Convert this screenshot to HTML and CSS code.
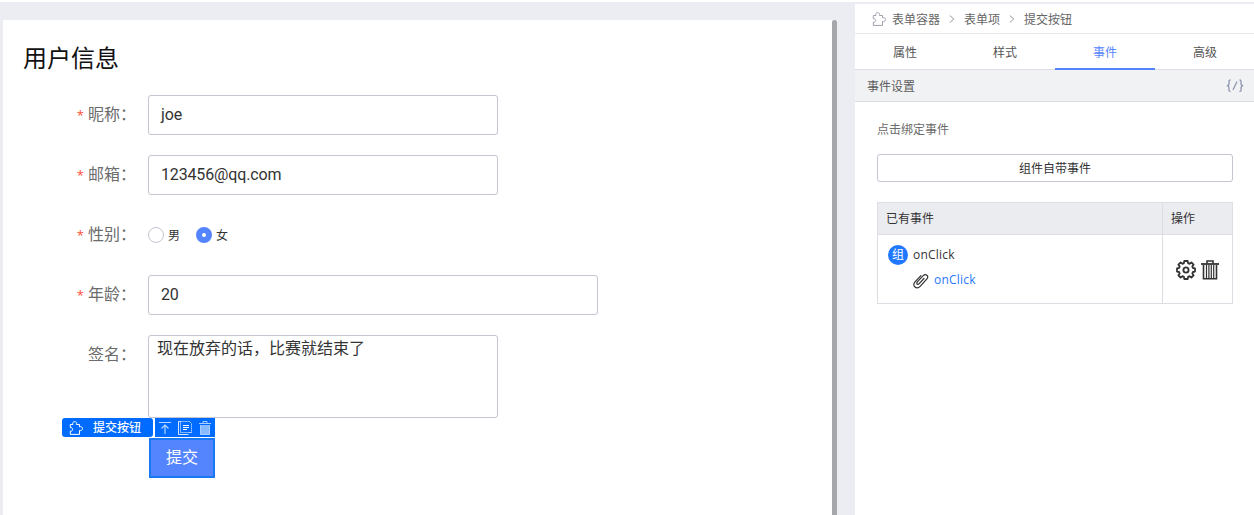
FILE: index.html
```html
<!DOCTYPE html>
<html lang="zh-CN">
<head>
<meta charset="utf-8">
<title>用户信息</title>
<link rel="stylesheet" href="styles.css">
</head>
<body>
<svg width="0" height="0" class="defs">
  <symbol id="puzzle" viewBox="0 0 14 14"><path d="M1.300 3.500H4C3.200 1.800 4.300.6 5.700.6s2.500 1.200 1.700 2.900h3.100v2.300c1.700-.6 3 .4 3 1.800s-1.300 2.400-3 1.800v4H1.300v-3.200c1.500.3 2.300-.6 2.300-1.800S2.800 6.300 1.300 6.600z" fill="none" stroke="currentColor" stroke-linejoin="round"/></symbol>
</svg>
<div class="app">
  <main class="canvas">
    <section class="page">
      <h1 class="title">用户信息</h1>
      <div class="row"><label class="label required">昵称：</label><div class="input">joe</div></div>
      <div class="row"><label class="label required">邮箱：</label><div class="input">123456@qq.com</div></div>
      <div class="row"><label class="label required">性别：</label>
        <div class="radios"><span class="radio"><i class="dot"></i><span class="radio-text">男</span></span><span class="radio"><i class="dot checked"></i><span class="radio-text">女</span></span></div>
      </div>
      <div class="row"><label class="label required">年龄：</label><div class="input wide">20</div></div>
      <div class="row area-row"><label class="label">签名：</label><div class="input area">现在放弃的话，比赛就结束了</div></div>
      <div class="submit-wrap">
        <div class="toolbar">
          <div class="tag"><svg width="14" height="14"><use href="#puzzle"/></svg><span>提交按钮</span></div>
          <div class="tools">
            <svg width="14" height="14" viewBox="0 0 14 14"><path d="M1 1.500h12M7 13V4.500M3.500 7.500L7 4l3.500 3.500" fill="none" stroke="#b5d6ff" stroke-width="1.200"/></svg>
            <svg width="14" height="14" viewBox="0 0 14 14" fill="none" stroke="#fff"><path d="M2.500.5h9l2 2v9h-2" stroke-dasharray="1 1"/><path d="M2.500.5v11h11" stroke-dasharray="1 1"/><path d="M2.500.5H.5v13h10" stroke="#d5e6ff"/><path d="M5 4.500h6M5 6.500h6M5 8.500h4"/></svg>
            <svg width="14" height="14" viewBox="0 0 14 14"><path d="M2 4h10v9.500H2z" fill="#8abaff"/><path d="M1 2.500h12M5 2V.5h4V2M2.500 4v9.500h9V4" fill="none" stroke="#a9cdff"/></svg>
          </div>
        </div>
        <button class="submit">提交</button>
      </div>
    </section>
    <div class="scrollbar"></div>
  </main>
  <aside class="panel">
    <nav class="crumbs">
      <svg class="crumb-icon" width="14" height="14"><use href="#puzzle"/></svg>
      <span>表单容器</span><svg class="sep" width="6" height="8" viewBox="0 0 6 8"><path d="M.8.5l4 3.500-4 3.500"/></svg><span>表单项</span><svg class="sep" width="6" height="8" viewBox="0 0 6 8"><path d="M.8.5l4 3.500-4 3.500"/></svg><span>提交按钮</span>
    </nav>
    <div class="tabs"><span class="tab">属性</span><span class="tab">样式</span><span class="tab active">事件</span><span class="tab">高级</span></div>
    <div class="section-head"><span>事件设置</span>
      <svg width="18" height="14" viewBox="0 0 18 14" fill="none" stroke="#8f96b0" stroke-width="1.300"><path d="M4.500 1C2.500 1 3 2.500 3 4.500S2.500 6.700.8 6.700C2.500 6.700 3 7.500 3 9.500s-.5 3 1.500 3M11 2.500L7 11M13.500 1c2 0 1.500 1.500 1.500 3.500s.5 2.200 2.200 2.200C15.500 6.700 15 7.500 15 9.500s.5 3-1.500 3"/></svg>
    </div>
    <div class="content">
      <div class="hint">点击绑定事件</div>
      <button class="bind">组件自带事件</button>
      <div class="table">
        <div class="cell head">已有事件</div><div class="cell head">操作</div>
        <div class="cell events">
          <div class="event"><span class="badge">组</span><span class="name">onClick</span></div>
          <div class="event child"><svg width="18" height="18" viewBox="0 0 18 18"><path d="M12.300 6.500L7.500 11.600c-1.500 1.600-3.400 0-1.900-1.700l5.900-6.300c2.500-2.500 6 .5 3.700 3.300L8.700 14.200c-3.800 4-9-.3-5.400-4.400l5.900-6.200" transform="translate(-.3 1)" fill="none" stroke="#333" stroke-width="1.200" stroke-linecap="round"/></svg><span class="name link">onClick</span></div>
        </div>
        <div class="cell ops">
          <svg width="20" height="20" viewBox="0 0 20 20" fill="none" stroke="#333" stroke-width="1.800" stroke-linejoin="round"><path d="M8.300 1h3.400l.4 2.200 1.400.6 1.900-1.300 2.200 2.200-1.300 1.900.6 1.400 2.100.4v3.200l-2.100.4-.6 1.400 1.300 1.900-2.200 2.200-1.900-1.300-1.400.6-.4 2.200H8.300l-.4-2.200-1.400-.6-1.900 1.300-2.200-2.200 1.300-1.900-.6-1.400L1 11.600V8.400L3.100 8l.6-1.400-1.300-1.900 2.200-2.200 1.900 1.300 1.400-.6z"/><circle cx="10" cy="10" r="2.600"/></svg>
          <svg width="18" height="20" viewBox="0 0 18 20" fill="none" stroke="#333"><path d="M0 4h18" stroke-width="1.800"/><path d="M6 3.500V1h6v2.500M2.500 5v13.700h13V5" stroke-width="1.600"/><path d="M5.500 5v13M7.900 5v13M10.300 5v13M12.700 5v13" stroke-width="1.200"/></svg>
        </div>
      </div>
    </div>
  </aside>
</div>
</body>
</html>
```
FILE: styles.css
```css
* { box-sizing: border-box; }
body { margin: 0; padding-top: 2px; height: 515px; overflow: hidden; background: #fff; color: #333; font: 12px "Roboto", "Noto Sans CJK SC", sans-serif; }
button { font-family: inherit; }
svg { display: block; flex: none; }
.defs { position: absolute; }
.app { display: flex; height: 513px; background: #ecedf2; }
.canvas { display: flex; width: 855px; padding: 18px 18px 0 3px; }
.page { width: 829px; padding: 20px; background: #fff; }
.scrollbar { width: 5px; background: #a6a7ab; border-radius: 3px 3px 0 0; }
.title { margin: 0 0 16px; height: 39px; font-size: 24px; font-weight: 400; line-height: 39px; color: #111; }
.row { display: flex; height: 40px; margin-bottom: 20px; }
.label { width: 125px; padding-right: 12px; text-align: right; font-size: 16px; line-height: 39px; color: #6b6b6b; white-space: nowrap; }
.required::before { content: "*"; margin-right: 4px; color: #ff4d36; font-family: "Open Sans", sans-serif; font-size: 13px; }
.input { width: 350px; height: 40px; padding: 0 12px; border: 1px solid #c3c5d0; border-radius: 3px; font-size: 16px; line-height: 37px; letter-spacing: -0.15px; }
.wide { width: 450px; }
.area-row { height: 83px; margin: 0; }
.area { height: 83px; padding: 1px 8px; line-height: 24px; letter-spacing: 0; }
.radios { display: flex; align-items: center; gap: 16px; }
.radio { display: flex; align-items: center; gap: 4px; }
.radio-text { padding-bottom: 2px; }
.dot { width: 16px; height: 16px; border: 1px solid #c3c5d0; border-radius: 50%; }
.dot.checked { border: 6px solid #5584ff; background: #fff; }
.submit-wrap { width: 153px; margin-left: 39px; }
.toolbar { display: flex; gap: 2px; height: 20px; color: #fff; }
.tag { display: flex; align-items: center; gap: 10px; width: 91px; height: 19px; padding-left: 7px; border-radius: 3px; background: #006cff; font-weight: 500; line-height: 20px; }
.tools { display: flex; align-items: center; gap: 6px; width: 60px; height: 19px; padding-left: 3px; background: #006cff; }
.submit { display: block; width: 66px; height: 40px; margin-left: 87px; padding: 0; border: 2px solid #1a78f5; background: #5584ff; color: #fff; font-size: 16px; line-height: 36px; }
.panel { width: 399px; margin-top: 2px; background: #fff; }
.crumbs { display: flex; align-items: center; height: 30px; padding-left: 17px; border-bottom: 1px solid #e6e7eb; color: #666; }
.crumb-icon { margin-right: 6px; color: #a0a2ad; }
.sep { margin: 0 9px; fill: none; stroke: #999; }
.tabs { display: flex; width: 399px; height: 36px; border-bottom: 1px solid #dcdee3; }
.tab { width: 100px; height: 36px; flex: none; line-height: 38px; text-align: center; color: #555; }
.tab.active { border-bottom: 2px solid #5584ff; color: #5584ff; }
.section-head { display: flex; align-items: center; justify-content: space-between; height: 32px; padding: 0 10px 0 12px; border-bottom: 1px solid #dcdee3; background: #f1f2f4; color: #5c5c5c; }
.content { padding: 18px 21px 0 22px; }
.hint { height: 34px; line-height: 20px; color: #6b6b6b; }
.bind { display: block; width: 356px; height: 28px; padding: 2px 0 0; border: 1px solid #c3c5d0; border-radius: 3px; background: #fff; color: #333; font-size: 12px; line-height: 24px; }
.table { display: grid; grid-template-columns: 285px 70px; grid-template-rows: 32px 69px; width: 356px; margin-top: 20px; border: 1px solid #dcdee3; border-width: 1px 0 0 1px; }
.cell { border: 1px solid #dcdee3; border-width: 0 1px 1px 0; }
.head { padding-left: 8px; background: #ebecf0; line-height: 32px; }
.events { padding: 9px 0 0 10px; }
.event { display: flex; align-items: center; gap: 5px; height: 22px; font-family: "Open Sans", "Noto Sans CJK SC", sans-serif; font-size: 12px; }
.name { padding-bottom: 2px; letter-spacing: 0.2px; }
.child { height: 28px; padding-left: 24px; gap: 4px; }
.badge { width: 20px; height: 20px; border-radius: 50%; background: #1f78ff; color: #fff; line-height: 20px; text-align: center; }
.link { color: #2878ff; }
.ops { display: flex; align-items: center; gap: 5px; padding: 2px 0 0 13px; }
```
